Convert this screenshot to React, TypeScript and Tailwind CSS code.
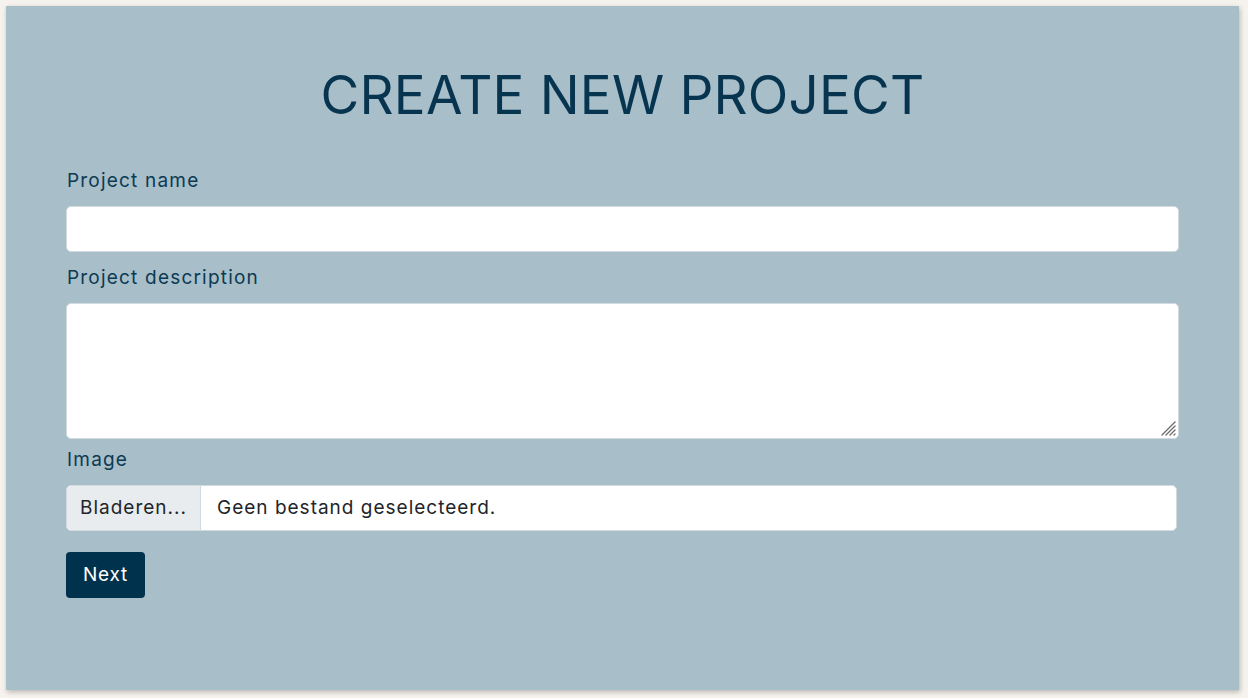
export default function App() {
  return (
    <div className="min-h-[698px] bg-[#f6f3ee] p-[6px] pr-[9px] pb-[8px] font-['Inter',sans-serif]">
      <div className="h-[684px] bg-[#a8bec9] px-[60px] pt-[50px] shadow-[1px_2px_5px_rgba(0,0,0,0.25)]">
        {/* Title */}
        <h1 className="flex h-[80px] items-center justify-center text-[53px] font-normal tracking-[0.2px] text-[#07344f]">
          CREATE NEW PROJECT
        </h1>

        <form className="mt-[31px] flex flex-col">
          <label className="h-[28px] pl-[1px] text-[19px] leading-[28px] tracking-[1.2px] text-[#0c3a52]">Project name</label>
          <input
            type="text"
            className="mt-[11px] h-[46px] w-full rounded-[5px] border border-[#d3dadf] bg-white px-3 outline-none"
          />

          <label className="mt-[12px] h-[28px] pl-[1px] text-[19px] leading-[28px] tracking-[1.2px] text-[#0c3a52]">Project description</label>
          <div className="relative mt-[11px]">
            <textarea className="block h-[136px] w-full resize-none rounded-[5px] border border-[#d3dadf] bg-white px-3 outline-none" />
            {/* resize grip */}
            <svg className="absolute right-[2px] bottom-[2px]" width="17" height="17" viewBox="0 0 17 17">
              <g stroke="#6b6b6b" strokeWidth="1.3" strokeLinecap="round">
                <line x1="2" y1="15" x2="15" y2="2" />
                <line x1="6" y1="15" x2="15" y2="6" />
                <line x1="10" y1="15" x2="15" y2="10" />
                <line x1="14" y1="15" x2="15" y2="14" />
              </g>
            </svg>
          </div>

          <label className="mt-[7px] h-[28px] pl-[1px] text-[19px] leading-[28px] tracking-[1.2px] text-[#0c3a52]">Image</label>
          <div className="mt-[11px] mr-[2px] flex h-[46px] overflow-hidden rounded-[5px] border border-[#d3dadf] bg-white text-[19px] tracking-[1px] text-[#212529]">
            <span className="flex w-[134px] items-center justify-center border-r border-[#d3dadf] bg-[#e8ecef]">Bladeren...</span>
            <span className="flex items-center pl-[16px]">Geen bestand geselecteerd.</span>
          </div>

          <div className="mt-[21px]">
            <button
              type="button"
              className="h-[46px] w-[79px] rounded-[4px] bg-[#00324d] text-[19px] tracking-[0.8px] text-white"
            >
              Next
            </button>
          </div>
        </form>
      </div>
    </div>
  );
}
